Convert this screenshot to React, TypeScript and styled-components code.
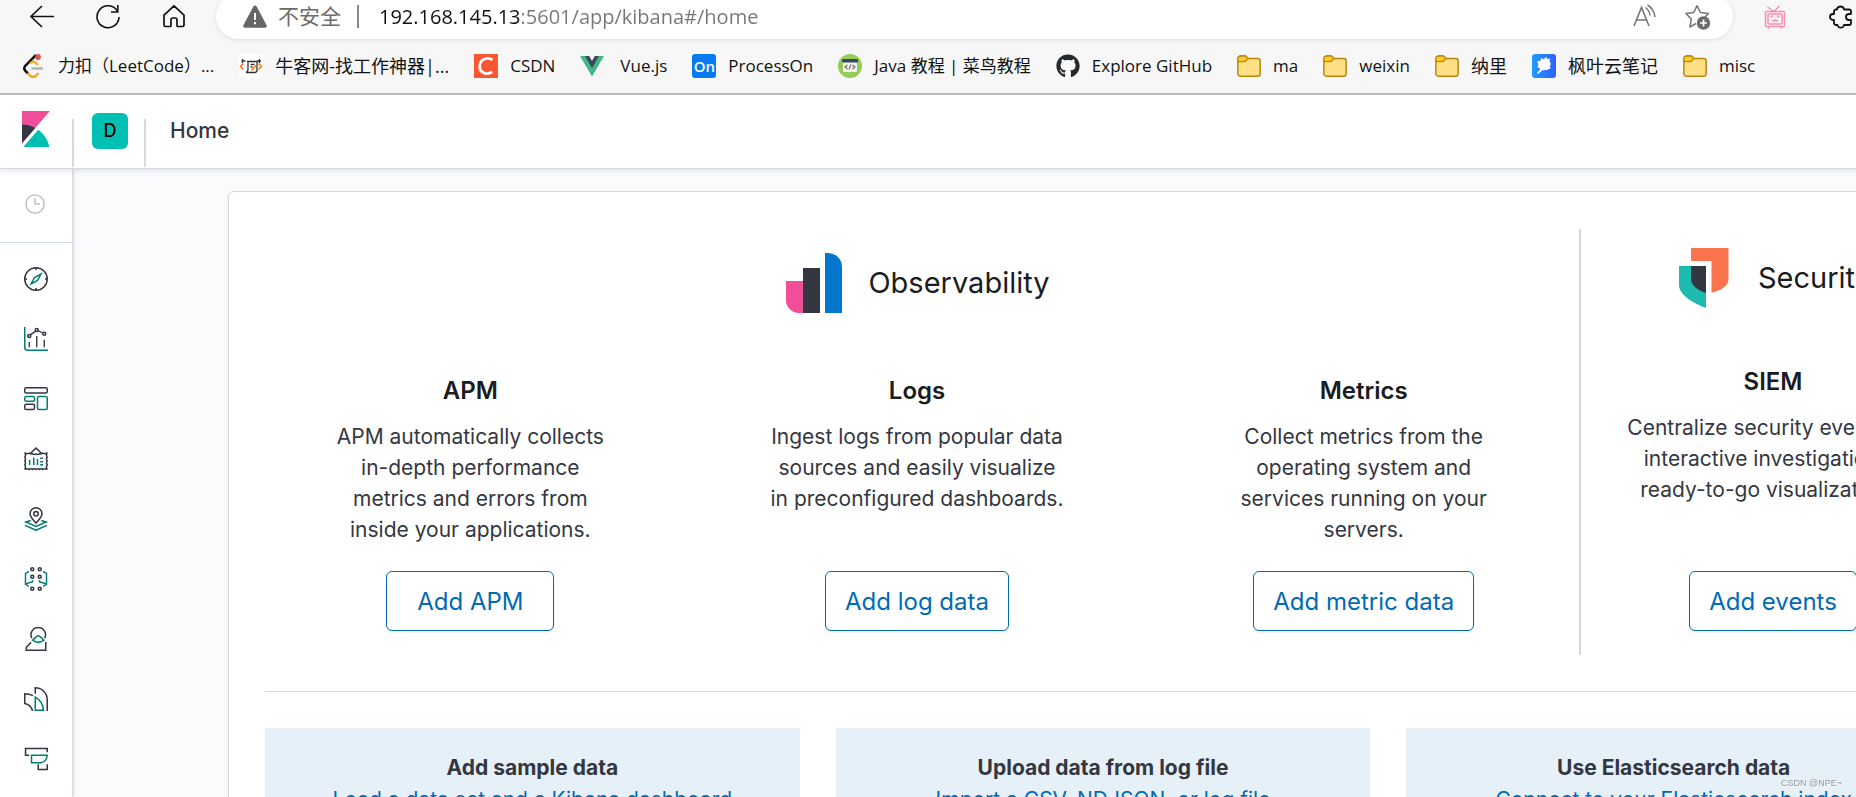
import React from "react";
import styled, { createGlobalStyle } from "styled-components";
import { FaGithub } from "react-icons/fa";

const GlobalStyle = createGlobalStyle`
  *, *::before, *::after { box-sizing: border-box; }
  body { margin: 0; background: #fafbfd; overflow: hidden; }
  button { font: inherit; }
`;

const chromeFont = `"Open Sans", "Noto Sans CJK SC", sans-serif`;
const kibanaFont = `Inter, "Liberation Sans", sans-serif`;
const ink = "#343741";
const teal = "#017d73";
const line = "#d3dae6";
const blue = "#006bb4";

const Window = styled.div`
  display: flex;
  flex-direction: column;
  height: 100vh;
  overflow: hidden;
`;

/* ---------- Browser chrome ---------- */

const Chrome = styled.header`
  flex: none;
  background: #f7f7f7;
  border-bottom: 2px solid #bdbdbd;
  font-family: ${chromeFont};
`;

const Toolbar = styled.div`
  display: flex;
  align-items: flex-end;
  height: 39px;
  padding-left: 30px;
`;

const ToolButtons = styled.div`
  display: flex;
  gap: 42px;
  padding-bottom: 10px;
`;

const IconButton = styled.button`
  flex: none;
  display: flex;
  padding: 0;
  border: 0;
  background: none;
  color: inherit;
`;

const AddressBar = styled.div`
  flex: 1;
  display: flex;
  align-items: center;
  height: 45px;
  margin-left: 30px;
  padding: 0 22px 0 27px;
  border-radius: 23px;
  background: #fff;
  box-shadow: 0 1px 5px rgba(0, 0, 0, 0.1);
  color: #6b6b6b;
`;

const Security = styled.span`
  margin-left: 11px;
  padding-right: 16px;
  border-right: 2px solid #8a8a8a;
  font-size: 21px;
  line-height: 23px;
  white-space: nowrap;
`;

const Url = styled.input`
  flex: 1;
  min-width: 0;
  margin-left: 20px;
  padding: 0;
  border: 0;
  outline: 0;
  font-family: ${chromeFont};
  font-size: 20px;
  line-height: 28px;
  color: transparent;
  background: linear-gradient(90deg, #111 142px, #767676 142px);
  background-clip: text;
  -webkit-background-clip: text;
`;

const AddressTools = styled.div`
  display: flex;
  gap: 28px;
  color: #767676;
`;

const Extensions = styled.div`
  display: flex;
  gap: 42px;
  margin: 0 3px 10px 30px;
`;

const Bookmarks = styled.nav`
  display: flex;
  align-items: center;
  height: 54px;
  padding-left: 22px;
  gap: 25px;
`;

const Bookmark = styled.a<{ $cjk: boolean }>`
  flex: none;
  display: flex;
  align-items: center;
  gap: 12px;
  color: #111;
  font-size: ${(p) => (p.$cjk ? 18 : 17)}px;
  line-height: 26px;
  text-decoration: none;
  white-space: nowrap;
`;

/* ---------- Kibana shell ---------- */

const Kibana = styled.div`
  flex: 1;
  min-height: 0;
  display: flex;
  flex-direction: column;
  font-family: ${kibanaFont};
  color: ${ink};
`;

const TopBar = styled.header`
  flex: none;
  position: relative;
  z-index: 2;
  display: flex;
  align-items: flex-start;
  height: 74px;
  background: #fff;
  border-bottom: 1px solid ${line};
  box-shadow: 0 3px 4px rgba(152, 162, 179, 0.2);
`;

const LogoLink = styled.a`
  display: flex;
  width: 72px;
  padding: 16px 0 0 22px;
`;

const Divided = styled.div`
  height: 48px;
  margin-top: 24px;
  width: 74px;
  border-left: 2px solid ${line};
  border-right: 2px solid ${line};
`;

const SpaceAvatar = styled.button`
  display: block;
  width: 36px;
  height: 36px;
  margin: -6px 0 0 18px;
  padding: 0;
  border: 0;
  border-radius: 6px;
  background: #00bfb3;
  color: #000;
  font-size: 18px;
  font-weight: 500;
  line-height: 36px;
  text-align: center;
`;

const Crumb = styled.span`
  margin: 20px 0 0 24px;
  font-size: 21px;
  line-height: 32px;
  font-weight: 500;
`;

const Body = styled.div`
  flex: 1;
  min-height: 0;
  display: flex;
`;

const SideNav = styled.nav`
  flex: none;
  position: relative;
  z-index: 1;
  width: 72px;
  background: #fff;
  box-shadow: 1px 0 3px rgba(90, 100, 120, 0.35);
`;

const Recent = styled.div`
  padding: 25px 0 0 25px;
  height: 74px;
  border-bottom: 1px solid ${line};
`;

const Apps = styled.div`
  display: flex;
  flex-direction: column;
  align-items: center;
  gap: 36px;
  padding-top: 24px;
`;

const AppLink = styled.a`
  display: flex;
`;

const Main = styled.main`
  flex: 1;
  min-width: 0;
  padding: 22px 0 0 156px;
  background: #fafbfd;
`;

const Panel = styled.section`
  width: calc(100% + 122px);
  padding: 37px 36px 36px;
  border: 1px solid ${line};
  border-radius: 6px;
  background: #fff;
  box-shadow: 0 1px 4px rgba(152, 162, 179, 0.15);
`;

const Solutions = styled.div`
  display: flex;
  height: 426px;
`;

const Solution = styled.section<{ $grow: boolean }>`
  display: flex;
  flex-direction: column;
  ${(p) => (p.$grow ? "flex: 1;" : "flex: none; width: 336px;")}
  padding: ${(p) => (p.$grow ? 24 : 19)}px 0 24px;
`;

const Rule = styled.div`
  flex: none;
  width: 2px;
  margin: 0 24px 0 10px;
  background: ${line};
`;

const SolutionHead = styled.div<{ $space: number }>`
  display: flex;
  align-items: center;
  justify-content: center;
  gap: 24px;
  height: 60px;
  margin-bottom: ${(p) => p.$space}px;
`;

const SolutionTitle = styled.h2`
  margin: 0;
  color: #1a1c21;
  font-size: 29px;
  line-height: 40px;
  font-weight: 400;
`;

const Columns = styled.div`
  flex: 1;
  display: flex;
  gap: 36px;
`;

const Card = styled.article`
  flex: 1 1 0;
  display: flex;
  flex-direction: column;
  align-items: center;
  text-align: center;
`;

const CardTitle = styled.h3`
  margin: 0 0 12px;
  color: #1a1c21;
  font-size: 24px;
  line-height: 36px;
  font-weight: 600;
`;

const CardText = styled.p`
  max-width: 295px;
  margin: 0;
  font-size: 21px;
  line-height: 31px;
`;

const AddButton = styled.button`
  min-width: 168px;
  height: 60px;
  margin-top: auto;
  padding: 0 19px;
  border: 1px solid ${blue};
  border-radius: 6px;
  background: #fff;
  box-shadow: 0 2px 2px rgba(152, 162, 179, 0.15);
  color: ${blue};
  font-size: 24px;
  white-space: nowrap;
`;

const Separator = styled.hr`
  height: 1px;
  margin: 36px 0;
  border: 0;
  background: ${line};
`;

const DataCards = styled.div`
  display: grid;
  grid-template-columns: repeat(3, 1fr);
  gap: 36px;
`;

const DataCard = styled.article`
  padding: 24px;
  background: #e6f0f8;
  text-align: center;
  font-size: 21px;
  line-height: 31px;
`;

const DataTitle = styled.h3`
  margin: 0;
  font-size: 21px;
  line-height: 32px;
  font-weight: 700;
`;

const DataLink = styled.a`
  color: ${blue};
  text-decoration: none;
`;

const Watermark = styled.span`
  position: fixed;
  right: 14px;
  bottom: 6px;
  z-index: 3;
  color: #8f959c;
  font-family: "Liberation Sans", sans-serif;
  font-size: 9px;
  line-height: 16px;
  text-shadow: 1px 1px 0 #fff;
`;

/* ---------- Icons ---------- */

type KidProps = { children: React.ReactNode; w?: number; h?: number; box?: string };

const Svg = ({ children, w = 24, h = 24, box = "0 0 24 24" }: KidProps) => (
  <svg width={w} height={h} viewBox={box} fill="none" aria-hidden="true">
    {children}
  </svg>
);

const AppIcon = ({ children }: { children: React.ReactNode }) => (
  <svg width="24" height="24" viewBox="0 0 32 32" fill="none" stroke={ink} strokeWidth="2" aria-hidden="true">
    {children}
  </svg>
);

const BackIcon = () => (
  <Svg>
    <path d="M24 11.500H1M12 1L1 11.500 12 22" stroke="#111" strokeWidth="1.600" />
  </Svg>
);

const RefreshIcon = () => (
  <Svg>
    <path d="M21.500 6.200A11 11 0 1 0 23 12" stroke="#111" strokeWidth="1.600" />
    <path d="M21.800 0V7H15" stroke="#111" strokeWidth="1.600" />
  </Svg>
);

const HomeIcon = () => (
  <Svg>
    <path
      d="M2 10.200 12 .800l10 9.400V20a1.500 1.500 0 0 1-1.500 1.500H16a1 1 0 0 1-1-1V15a2 2 0 0 0-2-2h-2a2 2 0 0 0-2 2v5.500a1 1 0 0 1-1 1H3.500A1.500 1.500 0 0 1 2 20Z"
      stroke="#111"
      strokeWidth="1.700"
      strokeLinejoin="round"
    />
  </Svg>
);

const WarningIcon = () => (
  <Svg>
    <path d="M10.200 1.700a2 2 0 0 1 3.600 0l9.800 18.600a1.700 1.700 0 0 1-1.500 2.500H1.900A1.700 1.700 0 0 1 .4 20.300Z" fill="#666" />
    <path d="M12 8v7M12 17v2.200" stroke="#fff" strokeWidth="2" />
  </Svg>
);

const ReadAloudIcon = () => (
  <Svg>
    <path d="M1 22 8.500 3.500 16 22M3.500 16h10" stroke="#777" strokeWidth="1.600" />
    <path d="M12.500 3.500q4 3 4.500 8M14.500 1q6.500 4 7.500 12" stroke="#777" strokeWidth="1.500" />
  </Svg>
);

const StarIcon = () => (
  <Svg w={26} h={26} box="0 0 26 26">
    <path
      d="m12 1.500 3.300 7 8.200 1-4 4M11 19.500 5 23l1.200-8L1 9.500l7.800-1L12 1.500"
      stroke="#777"
      strokeWidth="1.600"
      strokeLinejoin="round"
    />
    <circle cx="18.500" cy="19" r="6.700" fill="#6b6b6b" />
    <path d="M18.500 15.500v7M15 19h7" stroke="#fff" strokeWidth="1.700" />
  </Svg>
);

const TvIcon = () => (
  <Svg>
    <g stroke="#fb8fb0" strokeWidth="1.500">
      <rect x="2.500" y="6.500" width="19" height="15" rx="1" />
      <rect x="5" y="9" width="14" height="10" rx="1" />
      <path d="M4.500 2 11 6.500 16.500 1M5.500 22v2M18.500 22v2M7.500 12l2.500-1M14 11l2.500 1M9 15q1.500 2 3 0 1.500 2 3 0" />
    </g>
  </Svg>
);

const PuzzleIcon = () => (
  <Svg>
    <path
      d="M8 4.500V4a3.700 3.700 0 0 1 7 0v.5h5a2 2 0 0 1 2 2V9h-2a2.800 2.800 0 0 0 0 6h2v3a2 2 0 0 1-2 2h-5v.5a3.500 3.500 0 0 1-6.500 0V20H7a2 2 0 0 1-2-2v-3H4a3 3 0 0 1 0-6h1V6.500a2 2 0 0 1 2-2Z"
      stroke="#111"
      strokeWidth="1.800"
      strokeLinejoin="round"
    />
  </Svg>
);

const LeetCodeIcon = () => (
  <Svg>
    <path d="M14 1 3.500 11.500q-2.500 3 0 5.500L6 19.500" stroke="#111" strokeWidth="2.500" />
    <path d="m5.500 19 3 3q2.500 2 5 0l3-3M8 9.500q3-3.500 6-.5l2 2" stroke="#f5a623" strokeWidth="2.400" />
    <path d="M9.500 14.500H21" stroke="#b3b3b3" strokeWidth="2.400" />
    <circle cx="16" cy="3" r="2.900" fill="#d9534f" />
  </Svg>
);

const NowcoderIcon = () => (
  <Svg>
    <rect width="24" height="24" rx="3" fill="#fff" />
    <path d="M8 7.500h10v8.500q0 2.500-2.500 2.500H7q2-.5 2-3V7.500M11.500 10.500h4M11.500 13h2" stroke="#333" strokeWidth="1.300" />
    <path d="M3.500 5v4M20.500 5v4M2.500 7h4M18 7h4" stroke="#333" strokeWidth="1.300" />
    <path d="m4.500 9.500-3 3 3 3M19.500 9.500l3 3-3 3M17 11.500l-4.500 5" stroke="#ff7a1a" strokeWidth="1.600" />
  </Svg>
);

const CsdnIcon = () => (
  <Svg>
    <rect width="24" height="24" fill="#fc5531" />
    <path d="M18.500 5.800C12.500 2.500 6 5.500 5.700 12S12 21.500 18.200 18" stroke="#fff" strokeWidth="2.800" />
  </Svg>
);

const VueIcon = () => (
  <Svg w={28} box="0 0 28 24">
    <path d="M0 2h4.700L12 14.600 19.300 2H24L12 22.500Z" fill="#41b883" />
    <path d="M4.700 2h4.500L12 6.900 14.800 2h4.500L12 14.600Z" fill="#34495e" />
  </Svg>
);

const OnTile = styled.span`
  width: 24px;
  height: 24px;
  border-radius: 3px;
  background: #067bef;
  color: #fff;
  font: 600 15px/24px "Open Sans", sans-serif;
  text-align: center;
`;

const RunoobIcon = () => (
  <Svg>
    <circle cx="12" cy="12" r="12" fill="#96cb58" />
    <rect x="5" y="6" width="14" height="12" rx="1" fill="#f3f3e6" />
    <rect x="4" y="5" width="16" height="3.500" rx="1" fill="#34495e" />
    <path d="m9.500 11-2.500 2 2.500 2M14.500 11l2.500 2-2.500 2M13 10.500l-2 5" stroke="#667" strokeWidth="1.100" />
  </Svg>
);

const FolderIcon = () => (
  <Svg>
    <path d="M1 5a3 3 0 0 1 3-3h4.500l2.500 2.500h9.500a2.700 2.700 0 0 1 2.700 2.700v12.300a2.700 2.700 0 0 1-2.700 2.700h-17A2.700 2.700 0 0 1 .8 19.500Z" fill="#ffdf85" stroke="#b8870b" strokeWidth="1.500" />
    <path d="M.8 7.500V5a3 3 0 0 1 3-3h4.700L11 4.300 8.500 7q-.5.700-1.500.7Z" fill="#ffc928" stroke="#b8870b" strokeWidth="1.300" />
  </Svg>
);

const LeafIcon = () => (
  <Svg>
    <defs>
      <linearGradient id="leaf" x1="0" x2="1" y1="0" y2="0">
        <stop stopColor="#209cff" />
        <stop offset="1" stopColor="#2d62fb" />
      </linearGradient>
    </defs>
    <rect width="24" height="24" rx="3" fill="url(#leaf)" />
    <path
      d="M14 3l1.500 2 2.500-.5-.3 3 1.300 2.500-1.300 2 .8 2.500-4 1.500-4 .3L6 20l-1-1 3.500-4-3-2 .8-2-1-4 2.500.3L9.500 4l2 1.200Z"
      fill="#fff"
    />
  </Svg>
);

const KibanaLogo = () => (
  <Svg w={28} h={36} box="4 0 25 32">
    <path d="M4 0v28.789L28.935.017z" fill="#f04e98" />
    <path d="M4 12v16.789l11.906-13.738A24.721 24.721 0 0 0 4 12" fill="#343741" />
    <path d="M18.479 16.664 6.268 30.754l-1.073 1.237h23.191c-1.252-6.292-4.883-11.719-9.907-15.327" fill="#00bfb3" />
  </Svg>
);

const ClockIcon = () => (
  <Svg w={20} h={20} box="0 0 20 20">
    <circle cx="10" cy="10" r="9.100" stroke="#bfc1c5" strokeWidth="1.500" />
    <path d="M10 4v6h5" stroke="#bfc1c5" strokeWidth="1.500" />
  </Svg>
);

const ObservabilityLogo = () => (
  <Svg w={60} h={60} box="-2 0 60 60">
    <path d="M0 28h17v32h-4A13 13 0 0 1 0 47Z" fill="#f04e98" />
    <path d="M17 15h17v45H17Z" fill="#343741" />
    <path d="M39 0h3a14 14 0 0 1 14 14v46H39Z" fill="#0077cc" />
  </Svg>
);

const SecurityLogo = () => (
  <Svg w={60} h={60} box="-5 0 60 60">
    <path d="M12 0h37.500v31.500c0 6-7 11-17 13.300V13H12Z" fill="#fa744e" />
    <path d="M0 18h27v42C12 54.500 0 46 0 37Z" fill="#1dbab0" />
    <path d="M12 18h15v27c-9-3-15-8-15-14Z" fill="#343741" />
  </Svg>
);

const apps = [
  {
    name: "Discover",
    icon: (
      <>
        <circle cx="16" cy="16" r="15" />
        <path d="M16 1v3M16 28v3M1 16h3M28 16h3" />
        <path stroke={teal} d="M22.500 9.500 18 18l-8.500 4.500L14 14Z" />
      </>
    ),
  },
  {
    name: "Visualize",
    icon: (
      <>
        <path stroke={teal} d="M1 0v27q0 4 4 4h27" />
        <path strokeWidth="1.800" d="M7 20v7M17 12v15M27 17v10M8.500 10.500l7-5M19 5l6 3" />
        <circle cx="7" cy="12" r="2" />
        <circle cx="17" cy="4" r="2" />
        <circle cx="27" cy="9" r="2" />
      </>
    ),
  },
  {
    name: "Dashboard",
    icon: (
      <>
        <rect x="1" y="1" width="30" height="7" rx="2" />
        <rect x="1" y="12.500" width="13" height="6.500" rx="2" stroke={teal} />
        <rect x="1" y="23" width="13" height="7" rx="2" />
        <rect x="18" y="12.500" width="13" height="17.500" rx="2" stroke={teal} />
      </>
    ),
  },
  {
    name: "Canvas",
    icon: (
      <>
        <path d="M1 7.500q3 2.500 6 .5 2 2 4.500 1 2 2 4.500 0 2.500 2 4.500 0 2.500 1 4.500-1 3 2 6-.5-2 3 0 6-2 2.500 0 5-2 2.500 0 5-2 3 0 6.500-3-2-6 0-2-2-4.500 0-2-2-4.500 0-2.500-2-4.500 0-2.500-2-4.500 0-3-2-6 0 2-3.500 0-6.500 2-2.500 0-5 2-2.500 0-5 2-3 0-6Z" />
        <path d="m9 8 7-6.500L23 8" />
        <path stroke={teal} d="M7.500 17v7M13 14v10M18 16v8M21.500 15h4M21.500 19.500h4M21.500 23.500h4" />
      </>
    ),
  },
  {
    name: "Maps",
    icon: (
      <>
        <path d="M16 21.500C11 16 8 13 8 9a8 8 0 0 1 16 0c0 4-3 7-8 12.500Z" />
        <circle cx="16" cy="9" r="3" />
        <path stroke={teal} d="M9 18l-6.500 2L16 26l13.500-6L23 18M1.500 24.500 16 31l14.500-6.500" />
      </>
    ),
  },
  {
    name: "Machine Learning",
    icon: (
      <>
        {[3, 13, 29].map((y) => (
          <g key={y}>
            <circle cx="11" cy={y} r="2" />
            <circle cx="21" cy={y} r="2" />
          </g>
        ))}
        <path stroke={teal} d="M6.500 6 2 8.500V22.500l9.500-3v-2M2 22.500 6.500 26M25.500 6 30 8.500V22.500l-9.500-3v-2M30 22.500 25.500 26" />
      </>
    ),
  },
  {
    name: "Metrics",
    icon: (
      <>
        <path d="M10.500 15a9.700 9.700 0 1 1 17 0M9.500 20.500 3 27v4h26V20" />
        <path stroke={teal} d="M11.500 17.500 17 12.500q2-1.500 4 0l5.500 5q-7.500 6-15 0Z" />
      </>
    ),
  },
  {
    name: "APM",
    icon: (
      <>
        <path d="M15 9V1c9 0 16 7 16 16v15M12 11.500Q7 9 1 9v13q8 1.500 10.500 10" />
        <path stroke={teal} d="M15 13.500Q25 19 26 31H15Z" />
      </>
    ),
  },
  {
    name: "Logs",
    icon: (
      <>
        <path d="M7 11H2V2h29v5M19 23v7h12v-7" />
        <path stroke={teal} d="M10 11h21q-1 9-9 10H10Z" />
      </>
    ),
  },
];

const bookmarks: { label: string; icon: React.ReactNode; cjk?: boolean }[] = [
  { label: "力扣（LeetCode）...", icon: <LeetCodeIcon /> },
  { label: "牛客网-找工作神器|...", icon: <NowcoderIcon />, cjk: true },
  { label: "CSDN", icon: <CsdnIcon /> },
  { label: "Vue.js", icon: <VueIcon /> },
  { label: "ProcessOn", icon: <OnTile>On</OnTile> },
  { label: "Java 教程 | 菜鸟教程", icon: <RunoobIcon /> },
  { label: "Explore GitHub", icon: <FaGithub size={24} color="#24292e" /> },
  { label: "ma", icon: <FolderIcon /> },
  { label: "weixin", icon: <FolderIcon /> },
  { label: "纳里", icon: <FolderIcon />, cjk: true },
  { label: "枫叶云笔记", icon: <LeafIcon />, cjk: true },
  { label: "misc", icon: <FolderIcon /> },
];

const observability = [
  {
    title: "APM",
    text: "APM automatically collects in-depth performance metrics and errors from inside your applications.",
    action: "Add APM",
  },
  {
    title: "Logs",
    text: "Ingest logs from popular data sources and easily visualize in preconfigured dashboards.",
    action: "Add log data",
  },
  {
    title: "Metrics",
    text: "Collect metrics from the operating system and services running on your servers.",
    action: "Add metric data",
  },
];

const security = [
  {
    title: "SIEM",
    text: "Centralize security events for interactive investigation in ready-to-go visualizations.",
    action: "Add events",
  },
];

const dataCards = [
  ["Add sample data", "Load a data set and a Kibana dashboard"],
  ["Upload data from log file", "Import a CSV, NDJSON, or log file"],
  ["Use Elasticsearch data", "Connect to your Elasticsearch index"],
];

const CardColumns = ({ items }: { items: typeof observability }) => (
  <Columns>
    {items.map((item) => (
      <Card key={item.title}>
        <CardTitle>{item.title}</CardTitle>
        <CardText>{item.text}</CardText>
        <AddButton type="button">{item.action}</AddButton>
      </Card>
    ))}
  </Columns>
);

export default function App() {
  return (
    <Window>
      <GlobalStyle />
      <Chrome>
        <Toolbar>
          <ToolButtons>
            <IconButton aria-label="Back"><BackIcon /></IconButton>
            <IconButton aria-label="Refresh"><RefreshIcon /></IconButton>
            <IconButton aria-label="Home page"><HomeIcon /></IconButton>
          </ToolButtons>
          <AddressBar>
            <WarningIcon />
            <Security>不安全</Security>
            <Url aria-label="Address" defaultValue="192.168.145.13:5601/app/kibana#/home" />
            <AddressTools>
              <IconButton aria-label="Read aloud"><ReadAloudIcon /></IconButton>
              <IconButton aria-label="Add to favorites"><StarIcon /></IconButton>
            </AddressTools>
          </AddressBar>
          <Extensions>
            <IconButton aria-label="Video extension"><TvIcon /></IconButton>
            <IconButton aria-label="Extensions"><PuzzleIcon /></IconButton>
          </Extensions>
        </Toolbar>
        <Bookmarks aria-label="Bookmarks">
          {bookmarks.map(({ label, icon, cjk }) => (
            <Bookmark key={label} href="#" $cjk={!!cjk}>
              {icon}
              <span>{label}</span>
            </Bookmark>
          ))}
        </Bookmarks>
      </Chrome>

      <Kibana>
        <TopBar>
          <LogoLink href="#/home" aria-label="Kibana home"><KibanaLogo /></LogoLink>
          <Divided>
            <SpaceAvatar type="button">D</SpaceAvatar>
          </Divided>
          <Crumb>Home</Crumb>
        </TopBar>
        <Body>
          <SideNav aria-label="Applications">
            <Recent>
              <IconButton aria-label="Recently viewed"><ClockIcon /></IconButton>
            </Recent>
            <Apps>
              {apps.map((app) => (
                <AppLink key={app.name} href="#" aria-label={app.name}>
                  <AppIcon>{app.icon}</AppIcon>
                </AppLink>
              ))}
            </Apps>
          </SideNav>
          <Main>
            <Panel>
              <Solutions>
                <Solution $grow>
                  <SolutionHead $space={60}>
                    <ObservabilityLogo />
                    <SolutionTitle>Observability</SolutionTitle>
                  </SolutionHead>
                  <CardColumns items={observability} />
                </Solution>
                <Rule />
                <Solution $grow={false}>
                  <SolutionHead $space={56}>
                    <SecurityLogo />
                    <SolutionTitle>Security</SolutionTitle>
                  </SolutionHead>
                  <CardColumns items={security} />
                </Solution>
              </Solutions>
              <Separator />
              <DataCards>
                {dataCards.map(([title, link]) => (
                  <DataCard key={title}>
                    <DataTitle>{title}</DataTitle>
                    <DataLink href="#">{link}</DataLink>
                  </DataCard>
                ))}
              </DataCards>
            </Panel>
          </Main>
        </Body>
      </Kibana>
      <Watermark>CSDN @NPE~</Watermark>
    </Window>
  );
}
